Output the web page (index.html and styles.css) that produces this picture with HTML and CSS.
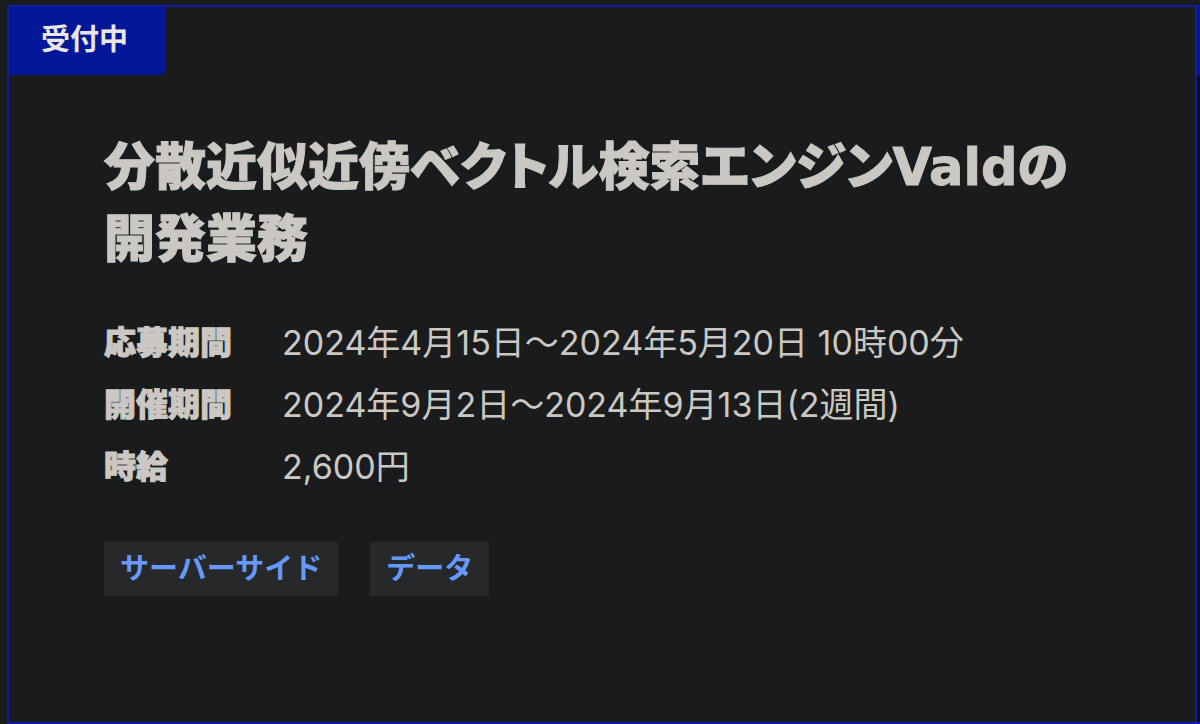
FILE: index.html
```html
<!DOCTYPE html>
<html lang="ja">
  <head>
    <meta charset="UTF-8" />
    <meta name="viewport" content="width=device-width, initial-scale=1.0" />
    <title>募集一覧</title>
    <link rel="stylesheet" href="styles.css">
  </head>
  <body>

    <main class="cards">

      <article class="card">
        <p class="status">受付中</p>
        <div class="card-body">
          <h2 class="title">分散近似近傍ベクトル検索エンジンValdの<span class="keep">開発業務</span></h2>

          <dl class="details">
            <dt>応募期間</dt>
            <dd>2024年4月15日〜2024年5月20日 10時00分</dd>
            <dt>開催期間</dt>
            <dd>2024年9月2日〜2024年9月13日(2週間)</dd>
            <dt>時給</dt>
            <dd>2,600円</dd>
          </dl>

          <ul class="tags">
            <li class="tag">サーバーサイド</li>
            <li class="tag">データ</li>
          </ul>
        </div>
      </article>

      <!-- next card, only its edge shows -->
      <div class="card-next">
        <div class="status-edge"></div>
      </div>

    </main>

  </body>
</html>
```
FILE: styles.css
```css
* {
  margin: 0;
  padding: 0;
  box-sizing: border-box;
}

body {
  background-color: #1a1b1c;
  color: #cbc8c3;
  font-family: Inter, "Noto Sans CJK JP", sans-serif;
}

.cards {
  display: flex;
  padding: 5px 0 0 7px;
}

.card {
  flex: 1;
  border: 2px solid #101ca4;
}

.card-next {
  flex: 0 0 3px;
  border-top: 2px solid #101ca4;
  border-bottom: 2px solid #101ca4;
  background-color: #0d0e10;
}

.status {
  width: fit-content;
  padding: 13px 37px 15px 32px;
  border-radius: 0 0 6px 0;
  background-color: #041799;
  color: #e8e6e3;
  font-size: 29px;
  font-weight: 700;
  line-height: 40px;
}

.status-edge {
  height: 68px;
  background-color: #041799;
}

.card-body {
  padding: 57px 96px 126px 95px;
}

.title {
  font-family: "DejaVu Sans", "Noto Sans CJK JP", sans-serif;
  font-size: 51px;
  font-weight: 900;
  line-height: 72px;
  font-feature-settings: "palt";
  -webkit-text-stroke: 1px #cbc8c3;
}

.keep {
  display: inline-block;
}

.details {
  display: grid;
  grid-template-columns: auto 1fr;
  gap: 14px 50px;
  margin-top: 43px;
  font-size: 32px;
  line-height: 48px;
}

.details dt {
  font-weight: 900;
  -webkit-text-stroke: 1px #cbc8c3;
}

.details dd {
  font-size: 34px;
}

.tags {
  display: flex;
  gap: 32px;
  margin-top: 51px;
  list-style: none;
}

.tag {
  padding: 7px 16px;
  background-color: #262829;
  color: #6699f8;
  font-size: 29px;
  font-weight: 700;
  line-height: 40px;
}
```
